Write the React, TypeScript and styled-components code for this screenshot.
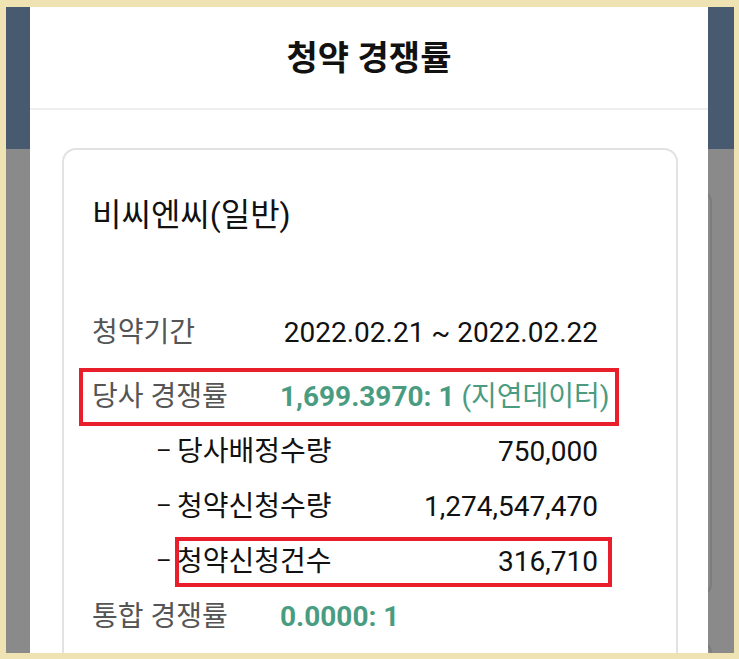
import React from 'react';
import styled, { createGlobalStyle } from 'styled-components';

const GlobalStyle = createGlobalStyle`
  html, body {
    margin: 0;
    padding: 0;
    background: #f0e3b3;
  }
  body {
    font-family: Roboto, "Noto Sans CJK KR", sans-serif;
  }
  * {
    box-sizing: border-box;
  }
`;

const Frame = styled.div`
  width: 739px;
  height: 659px;
  padding: 7px 5px 6px 6px;
`;

const Screen = styled.div`
  position: relative;
  height: 100%;
  overflow: hidden;
  display: flex;
  flex-direction: column;
`;

const AppBar = styled.div`
  height: 142px;
  flex-shrink: 0;
  background: #475a70;
`;

const PageBody = styled.div`
  flex: 1;
  background: #8a8a8a;
  padding: 41px 22px 0 40px;
  display: flex;
  flex-direction: column;
  gap: 45px;
`;

const BehindCard = styled.div`
  height: ${(p: { $height: number }) => p.$height}px;
  border: 2px solid #7c7c7c;
  border-radius: 12px;
  flex-shrink: 0;
`;

const Modal = styled.div`
  position: absolute;
  top: 0;
  bottom: 0;
  left: 24px;
  width: 678px;
  background: #ffffff;
  display: flex;
  flex-direction: column;
`;

const ModalHeader = styled.div`
  height: 103px;
  flex-shrink: 0;
  display: flex;
  align-items: center;
  justify-content: center;
  border-bottom: 2px solid #eeeeee;
`;

const ModalTitle = styled.h1`
  margin: 0 0 4px;
  font-size: 34px;
  font-weight: 700;
  color: #111111;
`;

const ModalBody = styled.div`
  padding: 38px 30px 0 32px;
`;

const Card = styled.div`
  border: 2px solid #e2e2e2;
  border-radius: 14px;
  padding: 43px 78px 0 28px;
  height: 620px;
`;

const StockName = styled.h2`
  margin: 0;
  font-size: 32px;
  line-height: 44px;
  font-weight: 400;
  color: #111111;
`;

const Rows = styled.div`
  margin-top: 68px;
  display: flex;
  flex-direction: column;
`;

const Row = styled.div<{ $gapBelow?: number }>`
  position: relative;
  display: grid;
  grid-template-columns: 188px 1fr;
  height: 55px;
  line-height: 55px;
  font-size: 28px;
  margin-bottom: ${(p) => p.$gapBelow ?? 0}px;
`;

const Label = styled.span`
  color: #555555;
  white-space: nowrap;
`;

const Value = styled.span<{ $align?: 'start' | 'end'; $accent?: boolean }>`
  justify-self: ${(p) => p.$align ?? 'end'};
  white-space: nowrap;
  color: ${(p) => (p.$accent ? '#4a9c81' : '#111111')};
`;

const Strong = styled.span`
  font-weight: 700;
`;

const SubRow = styled.div`
  display: flex;
  height: 55px;
  line-height: 55px;
  font-size: 28px;
  color: #111111;
  padding-left: 64px;
`;

const Dash = styled.span`
  width: 21px;
  flex-shrink: 0;
  font-size: 24px;
`;

const SubBody = styled.div`
  position: relative;
  flex: 1;
  display: flex;
  justify-content: space-between;
  white-space: nowrap;
`;

const Mark = styled.span<{ $inset: string }>`
  position: absolute;
  inset: ${(p) => p.$inset};
  border: 4px solid #e81f2a;
  pointer-events: none;
`;

export default function App() {
  return (
    <>
      <GlobalStyle />
      <Frame>
        <Screen>
          <AppBar />
          <PageBody>
            <BehindCard $height={406} />
            <BehindCard $height={300} />
          </PageBody>
          <Modal>
            <ModalHeader>
              <ModalTitle>청약 경쟁률</ModalTitle>
            </ModalHeader>
            <ModalBody>
              <Card>
                <StockName>비씨엔씨(일반)</StockName>
                <Rows>
                  <Row $gapBelow={9}>
                    <Label>청약기간</Label>
                    <Value>2022.02.21 ~ 2022.02.22</Value>
                  </Row>
                  <Row>
                    <Label>당사 경쟁률</Label>
                    <Value $align="start" $accent>
                      <Strong>1,699.3970: 1</Strong> (지연데이터)
                    </Value>
                    <Mark $inset="-1px -21px -2px -13px" />
                  </Row>
                  <SubRow>
                    <Dash>–</Dash>
                    <SubBody>
                      <span>당사배정수량</span>
                      <span>750,000</span>
                    </SubBody>
                  </SubRow>
                  <SubRow>
                    <Dash>–</Dash>
                    <SubBody>
                      <span>청약신청수량</span>
                      <span>1,274,547,470</span>
                    </SubBody>
                  </SubRow>
                  <SubRow>
                    <Dash>–</Dash>
                    <SubBody>
                      <span>청약신청건수</span>
                      <span>316,710</span>
                      <Mark $inset="3px -14px 2px -2px" />
                    </SubBody>
                  </SubRow>
                  <Row>
                    <Label>통합 경쟁률</Label>
                    <Value $align="start" $accent>
                      <Strong>0.0000: 1</Strong>
                    </Value>
                  </Row>
                </Rows>
              </Card>
            </ModalBody>
          </Modal>
        </Screen>
      </Frame>
    </>
  );
}
